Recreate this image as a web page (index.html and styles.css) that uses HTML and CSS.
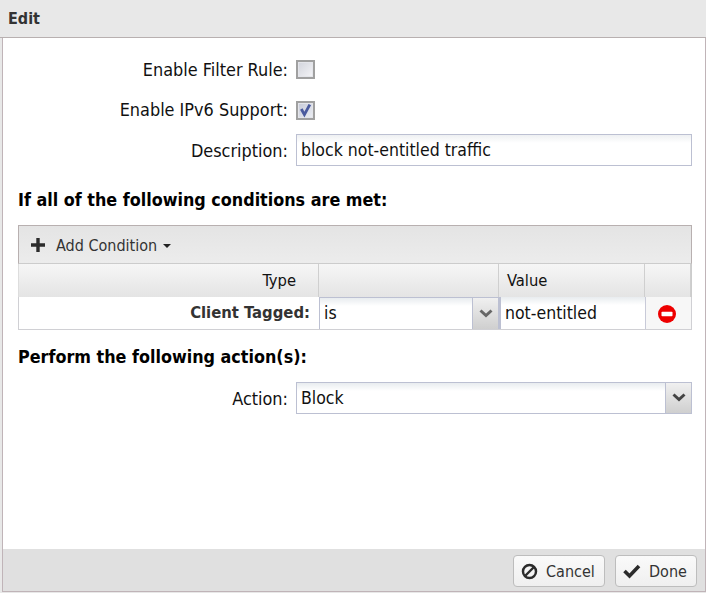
FILE: index.html
```html
<!DOCTYPE html>
<html lang="en">
<head>
<meta charset="utf-8">
<title>Edit</title>
<link rel="stylesheet" href="styles.css">
</head>
<body>
<div class="dialog">
  <header class="title">Edit</header>
  <main class="content">
    <div class="row row-check1">
      <label class="label">Enable Filter Rule:</label>
      <span class="check"></span>
    </div>
    <div class="row row-check2">
      <label class="label">Enable IPv6 Support:</label>
      <span class="check checked">
        <svg class="tick" viewBox="0 0 14 14" width="14" height="14"><path d="M2.3 5 L5.4 10.6 L10.8 0.6" fill="none" stroke="#4a5a9e" stroke-width="2.8"/></svg>
      </span>
    </div>
    <div class="row row-desc">
      <label class="label">Description:</label>
      <div class="input input-wide">block not-entitled traffic</div>
    </div>
    <h2 class="heading heading-1">If all of the following conditions are met:</h2>
    <section class="grid">
      <div class="toolbar">
        <svg class="plus" viewBox="0 0 14 14" width="14" height="14"><path d="M5.3 0h3.4v5.3H14v3.4H8.7V14H5.3V8.7H0V5.3h5.3z" fill="#2b2b2b"/></svg>
        <span class="add">Add Condition</span>
        <span class="caret"></span>
      </div>
      <div class="cols head">
        <div class="cell c-type">Type</div>
        <div class="cell c-op"></div>
        <div class="cell c-val">Value</div>
        <div class="cell c-act"></div>
      </div>
      <div class="cols body">
        <div class="bcell c-type tagged">Client Tagged:</div>
        <div class="bcell c-op">
          <div class="select select-op"><span class="sel-text">is</span><span class="arrow"><svg viewBox="0 0 14 10" width="14" height="10"><path d="M1.5 1.5 L7 6.5 L12.5 1.5" fill="none" stroke="#666" stroke-width="3"/></svg></span></div>
        </div>
        <div class="bcell c-val"><div class="val-input">not-entitled</div></div>
        <div class="bcell c-act">
          <svg class="remove" viewBox="0 0 18 18" width="18" height="18"><circle cx="9" cy="9" r="9" fill="#ee0000"/><rect x="3.5" y="6.7" width="11" height="4.6" rx="0.8" fill="#fff"/></svg>
        </div>
      </div>
    </section>
    <h2 class="heading heading-2">Perform the following action(s):</h2>
    <div class="row row-action">
      <label class="label">Action:</label>
      <div class="select select-action"><span class="sel-text">Block</span><span class="arrow"><svg viewBox="0 0 14 10" width="14" height="10"><path d="M1.5 1.5 L7 6.5 L12.5 1.5" fill="none" stroke="#444" stroke-width="3"/></svg></span></div>
    </div>
  </main>
  <footer class="footer">
    <button class="btn btn-cancel"><svg viewBox="0 0 18 18" width="17" height="17"><circle cx="9" cy="9" r="6.9" fill="none" stroke="#2b2b2b" stroke-width="2.6"/><path d="M4.5 13.5 L13.5 4.5" stroke="#2b2b2b" stroke-width="2.6"/></svg><span>Cancel</span></button>
    <button class="btn btn-done"><svg viewBox="0 0 18 16" width="18" height="16"><path d="M1.5 8 L6.5 13 L16 3" fill="none" stroke="#2b2b2b" stroke-width="3.6"/></svg><span>Done</span></button>
  </footer>
</div>
</body>
</html>
```
FILE: styles.css
```css
* { box-sizing: border-box; }
html, body { margin: 0; padding: 0; height: 100%; background: #fff; }
body { font-family: "DejaVu Sans Condensed", "DejaVu Sans", sans-serif; font-stretch: condensed; font-size: 17.9px; color: #111; overflow: hidden; }
.dialog { width: 706px; height: 593px; display: flex; flex-direction: column; background: #e8e8e8; }
.title { height: 38px; padding: 10px 0 0 8px; font-weight: bold; font-size: 16px; line-height: 18px; color: #333; background: #e8e8e8; border-bottom: 1px solid #b8b0b0; }
.content { height: 511px; margin-left: 2px; padding: 0 12px 0 15px; background: #fff; border-left: 1px solid #c0b4b8; border-right: 1px solid #c0b4b8; display: flex; flex-direction: column; }
.row { display: flex; align-items: center; gap: 8px; }
.label { width: 270px; flex: none; text-align: right; white-space: nowrap; }
.row-check1 { margin-top: 22px; height: 19px; }
.row-check2 { margin-top: 22px; height: 19px; }
.row-check2 .label { padding-bottom: 2px; }
.row-desc { margin-top: 14px; height: 32px; }
.check { width: 19px; height: 19px; border: 2px solid #a0a0a0; background: linear-gradient(135deg, #d2d4dc, #f4f4f7); box-shadow: inset 0 0 0 1px #e4e5ea; display: flex; align-items: center; justify-content: center; }
.checked { background: linear-gradient(135deg, #c6cad8, #eceef4); }
.input { height: 32px; border: 1px solid #bcc0d2; line-height: 30px; padding-left: 4px; font-size: 17.5px; background: linear-gradient(#eef0f2, #fff 8px); }
.input-wide { width: 396px; flex: none; }
.heading { margin: 0; font-size: 17.8px; font-weight: bold; line-height: 20px; color: #000; }
.heading-1 { margin-top: 24px; }
.grid { margin-top: 15px; width: 674px; }
.toolbar { height: 39px; display: flex; align-items: center; padding-left: 12px; background: linear-gradient(#e4e4e4, #ececec); border: 1px solid #b8b0b0; border-bottom: 1px solid #ccc; color: #333; }
.plus { margin-right: 11px; }
.add { font-size: 16px; padding-top: 2px; }
.caret { margin: 2px 0 0 6px; border: 4px solid transparent; border-top: 4px solid #222; border-bottom: 0; }
.cols { display: flex; }
.head { height: 33px; background: linear-gradient(#f6f6f6, #e4e4e4); border-right: 1px solid #ccc; border-left: 1px solid #ddd; }
.cell { border-right: 1px solid #cfcfcf; line-height: 33px; font-size: 16.4px; }
.c-type { width: 300px; text-align: right; padding-right: 22px; flex: none; }
.c-op { width: 180px; flex: none; }
.c-val { width: 146px; padding-left: 8px; flex: none; }
.c-act { flex: 1; }
.body { height: 33px; border: 1px solid #d0d0d4; border-top: 0; }
.bcell { display: flex; align-items: center; }
.tagged { justify-content: flex-end; padding-right: 9px; font-weight: bold; color: #333; font-size: 16.5px; padding-bottom: 2px; }
.body .c-type { width: 300px; }
.body .c-op { width: 180px; }
.body .c-val { width: 146px; padding: 0; }
.body .c-act { padding-left: 12px; background: #f7f7f7; border-left: 1px solid #c8cad8; }
.remove { margin-top: 2px; }
.select { display: flex; background: linear-gradient(#e8ecef, #fff 8px); border: 1px solid #bcc0d2; font-size: 17.5px; }
.select-op { width: 100%; height: 32px; border-bottom: 0; }
.sel-text { flex: 1; padding-left: 4px; line-height: 30px; }
.arrow { width: 26px; flex: none; display: flex; align-items: center; justify-content: center; background: linear-gradient(#f0f0f0, #cfcfcf); border-left: 1px solid #bcc0d2; }
.val-input { width: 100%; height: 32px; padding-left: 4px; line-height: 32px; font-size: 17.5px; border-left: 2px solid #bcc0d2; background: linear-gradient(#e8ecef, #fff 8px); }
.heading-2 { margin-top: 17px; }
.row-action { margin-top: 15px; height: 32px; }
.select-action { width: 396px; height: 32px; flex: none; }
.footer { height: 43px; background: #e0e0e0; display: flex; justify-content: flex-end; gap: 10px; padding: 6px 8px 0 0; margin-left: 2px; border-left: 1px solid #c0b4b8; border-right: 1px solid #c0b4b8; border-bottom: 1px solid #c0b4b8; }
.btn { height: 32px; display: flex; align-items: center; gap: 8px; border: 1px solid #bdbdbd; border-radius: 4px; background: linear-gradient(#fafafa, #efefef); font: 16px "DejaVu Sans Condensed", "DejaVu Sans", sans-serif; font-stretch: condensed; color: #333; padding: 0 0 0 7px; }
.btn-cancel { width: 92px; }
.btn-done { width: 82px; }
```
